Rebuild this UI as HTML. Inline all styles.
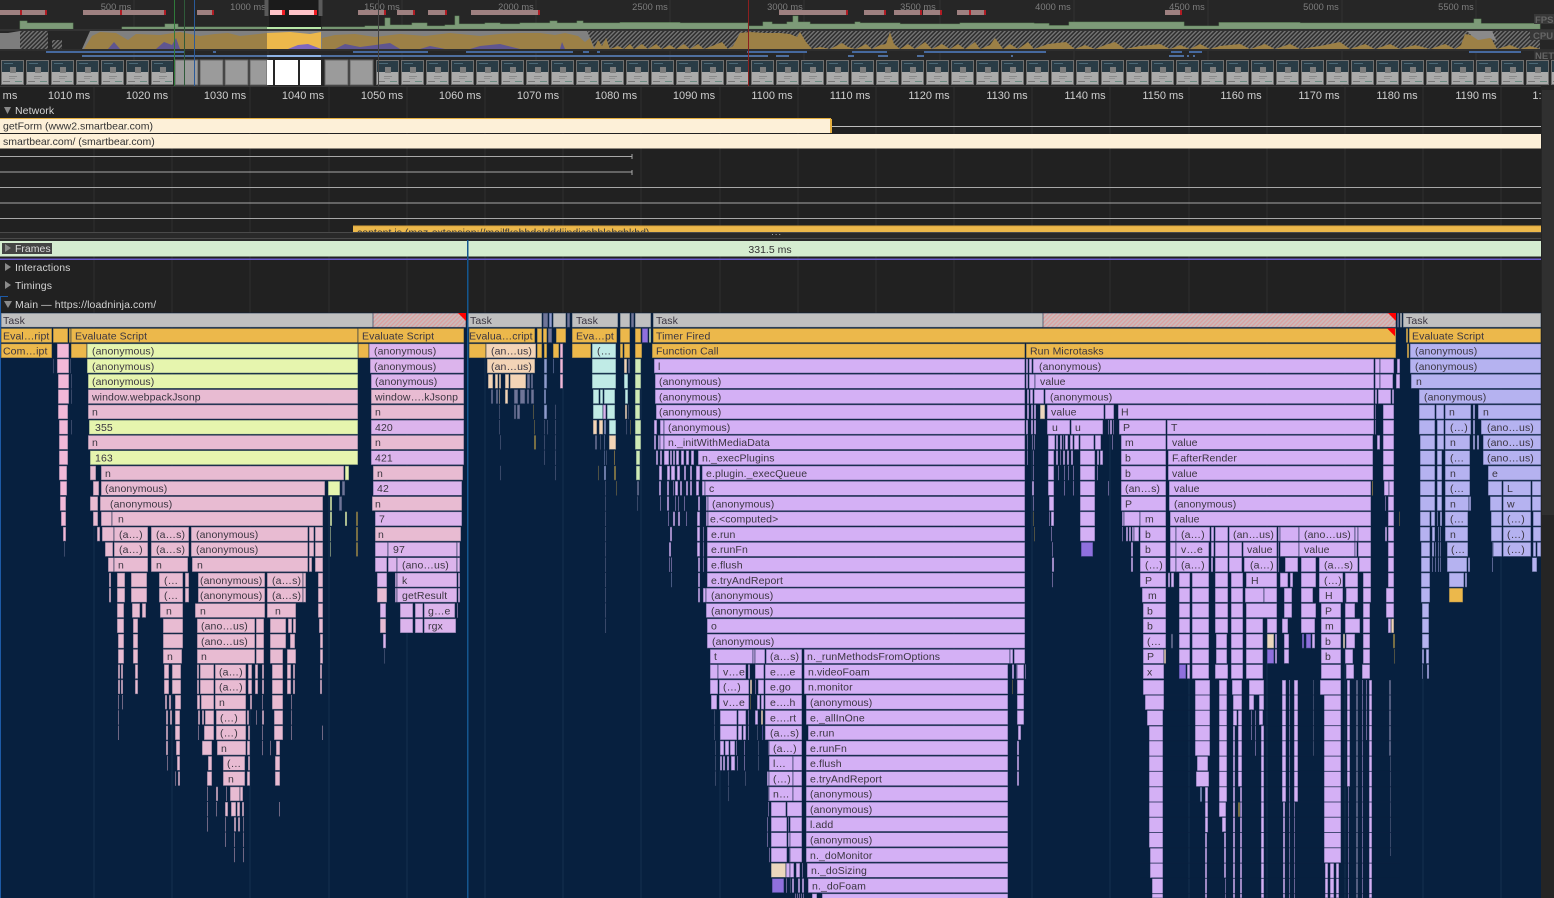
<!DOCTYPE html>
<html><head><meta charset="utf-8"><title>Performance</title>
<style>
html,body{margin:0;padding:0;background:#222;overflow:hidden}
svg{display:block;position:absolute;left:0;top:0}
text{font-family:"Liberation Sans",sans-serif}
.o text{font-size:9.3px;fill:#7e7e7e;text-anchor:middle}
.r text{font-size:11px;fill:#d0d0d0;text-anchor:middle}
.h text{font-size:10.5px;fill:#d4d4d4;letter-spacing:.1px}
.n text{font-size:10.5px;fill:#333}
.f{fill:#d4b0f5}
.f rect{height:14.4px;stroke:#0b2242;stroke-opacity:.55;stroke-width:1}
.f text{font-size:10.5px;fill:#3a3540;letter-spacing:.1px}
.e{fill:#d4b0f5}
.e rect{stroke:#0b2242;stroke-opacity:.55;stroke-width:1}
.a{fill:#ecb84b}.g{fill:#c0c0c0}.l{fill:#e6f5ae}.p{fill:#e8bbd2}.q{fill:#f2b8d8}.v{fill:#dcb4ec}
.k{fill:#f3d4b6}.c{fill:#c0ebe6}.b{fill:#b5b2f0}.s{fill:#cfeab6}.d{fill:#8f70de}.i{fill:#8f9ccd}.t{fill:#6f7598}.y{fill:#a08a45}.m{fill:#ecd7bd}
</style></head><body>
<svg width="1554" height="898" viewBox="0 0 1554 898" xmlns="http://www.w3.org/2000/svg">
<defs>
<pattern id="h" width="3" height="3" patternUnits="userSpaceOnUse" patternTransform="rotate(45)"><rect width="3" height="3" fill="#2e2e2e"/><rect width="1.4" height="3" fill="#757575"/></pattern>
<pattern id="h2" width="3" height="3" patternUnits="userSpaceOnUse" patternTransform="rotate(45)"><rect width="3" height="3" fill="#cbbcbc"/><rect width="1.3" height="3" fill="#dc9f9f"/></pattern>
<pattern id="fr" width="25" height="26" x="1" y="60" patternUnits="userSpaceOnUse">
<rect x="0" y="0" width="23" height="25" fill="#707070"/><rect x="1" y="1" width="21" height="11" fill="#2a3c46"/><rect x="1" y="12" width="21" height="12" fill="#ababab"/><rect x="9" y="7" width="6" height="6" fill="#7d7d7d"/><rect x="3" y="3" width="9" height="1" fill="#4d6a78"/><rect x="8" y="16" width="8" height="1" fill="#8a8a8a"/><rect x="8" y="18" width="6" height="1" fill="#949494"/><rect x="2" y="21" width="7" height="1" fill="#777"/><rect x="14" y="21" width="7" height="1" fill="#6a8a80"/>
</pattern>
</defs>

<!-- base -->
<rect width="1554" height="898" fill="#212121"/>
<rect y="0" width="1554" height="86" fill="#262626"/>
<rect x="267" y="0" width="54" height="30" fill="#1b1b1b"/>
<path d="M134 0V86M268 0V86M402 0V86M536 0V86M670 0V86M804 0V86M940 0V86M1074 0V86M1208 0V86M1342 0V86M1476 0V86" stroke="#333" stroke-width="1"/>
<g class="o"><text x="116" y="10">500 ms</text><text x="248" y="10">1000 ms</text><text x="382" y="10">1500 ms</text><text x="516" y="10">2000 ms</text><text x="650" y="10">2500 ms</text><text x="785" y="10">3000 ms</text><text x="918" y="10">3500 ms</text><text x="1053" y="10">4000 ms</text><text x="1187" y="10">4500 ms</text><text x="1321" y="10">5000 ms</text><text x="1456" y="10">5500 ms</text></g>

<!-- long task bars -->
<path d="M0 10h21v5H0zM22 10h24v5H22zM83 10h38v5H83zM122 10h44v5h-44zM197 10h16v5h-16zM358 10h27v5h-27zM397 10h17v5h-17zM428 10h18v5h-18zM471 10h68v5h-68zM779 10h68v5h-68zM864 10h21v5h-21zM894 10h27v5h-27zM923 10h18v5h-18zM957 10h28v5h-28zM1165 10h16v5h-16z" fill="#9e8080"/>
<path d="M20 10h2v5h-2zM45 10h2v5h-2zM120 10h2v5h-2zM164 10h2v5h-2zM212 10h2v5h-2zM384 10h2v5h-2zM413 10h2v5h-2zM445 10h2v5h-2zM538 10h2v5h-2zM846 10h2v5h-2zM884 10h2v5h-2zM920 10h2v5h-2zM940 10h2v5h-2zM969 10h2v5h-2zM984 10h2v5h-2zM1180 10h2v5h-2z" fill="#b01c24"/>
<path d="M270 10h14v5h-14zM289 10h26v5h-26z" fill="#ffc4c8"/><path d="M282 10h3v5h-3zM314 10h3v5h-3z" fill="#f01c24"/>

<!-- FPS -->
<path d="M20 29V21H27V23H73V29ZM122 29V27H165V24H178V27H267V29ZM322 29V27H365V26H385V18H390V25H412V23H427V26H445V25H455V16H459V24H485V23H500V24H520V23H550V21H557V23H577V21H583V23H620V22.500H680V23H748V26H763V22H772V24H787V22H793V16H798V22H810V24H855V22H860V23H900V24H960V23H1034V23.500H1049V25.500H1069V22H1184V26H1219V22.500H1300V23H1474V19H1481V23.500H1540V29Z" fill="#7d9a78" stroke="#648c5f" stroke-width=".6"/>
<rect x="267" y="27" width="54" height="2" fill="#b8e8a8"/>
<rect y="29" width="1554" height="2" fill="#333"/>

<!-- CPU -->
<rect x="20" y="31" width="28" height="18" fill="url(#h)"/>
<rect x="587" y="31" width="953" height="18" fill="url(#h)"/>
<rect x="52" y="40" width="10" height="9" fill="url(#h)"/>
<path d="M0 49V33H8L20 31V49Z" fill="#7d7d7d"/>
<path d="M82 49L90 31H587L595 49Z" fill="#808080"/>
<path d="M84 49L92 36 100 32 116 33 128 40 136 34 160 35 180 32 200 36 215 34 228 33 240 36 267 33V49ZM322 49V38L335 35 355 34 375 37 400 34 425 36 450 33 480 36 500 34 520 33 540 33 555 35 565 33 578 36 585 42 590 38 594 49Z" fill="#9c8046"/>
<path d="M108 49L114 42 120 49ZM156 49L164 42 172 45 176 38 180 49ZM335 49L345 44 360 47 390 43 400 49ZM420 49L430 46 445 49ZM470 49L480 46 500 44 520 49ZM560 49L562 42 565 49Z" fill="#5f5590"/>
<path d="M594 49L598 40 602 46 606 38 610 49 618 46 624 49 630 44 634 49 642 44 648 49 656 44 662 49 670 45 676 49 684 44 690 49 698 44 704 49 712 46 722 42 728 49 733 46 740 33 750 32 765 33 780 33 790 34 797 37 800 32 806 42 812 49 820 47 830 49 842 43 848 47 856 49 866 44 872 49 880 45 886 44 890 32 894 44 900 49 908 44 915 49 925 42 932 49 942 44 950 49 958 44 965 49 975 42 980 49 990 45 995 38 1003 49 1010 44 1018 49 1028 42 1034 49 1048 44 1066 42 1075 49 1085 45 1095 49 1105 45 1115 42 1125 49 1140 46 1160 44 1170 49 1180 45 1190 49 1200 44 1210 49 1220 46 1240 44 1250 49 1265 44 1275 49 1290 44 1300 49 1320 46 1340 42 1350 49 1365 44 1375 49 1390 44 1400 49 1415 45 1430 49 1445 44 1455 49 1461 45 1465 34 1480 37 1490 36 1497 49 1510 45 1520 49 1530 46 1540 49Z" fill="#9c8046"/>
<path d="M1467 31H1492L1497 42 1490 38 1478 40 1472 36Z" fill="#8a8a8a"/>
<rect x="267" y="31" width="54" height="18" fill="#8a8a8a"/>
<path d="M267 49V33L290 32 310 34 321 32V49Z" fill="#ecb84b"/>
<path d="M288 49L298 45 308 44 316 47 321 49Z" fill="#7f68c0"/>
<rect y="49" width="1554" height="2" fill="#2e2e2e"/>

<!-- NET -->
<path d="M46 51h139v2H46zM213 51h3v2h-3zM353 51h75v2h-75zM466 51h107v2H466zM583 51h6v2h-6zM597 51h3v2h-3zM747 51h60v2h-60zM852 51h35v2h-35zM924 51h122v2H924zM1171 51h11v2h-11zM1189 51h13v2h-13zM1469 51h52v2h-52z" fill="#46699e"/>
<path d="M82 55h185v2H82zM321 55h447v2H321zM776 55h13v2h-13zM848 55h6v2h-6zM878 55h10v2h-10zM917 55h7v2h-7zM1011 55h2v2h-2zM1169 55h15v2h-15zM1187 55h2v2h-2zM1193 55h2v2h-2z" fill="#4f6f9e"/>
<rect x="267" y="55" width="54" height="2" fill="#8fb4e6"/>

<!-- filmstrip -->
<rect x="1" y="60" width="172" height="25" fill="url(#fr)"/>
<rect x="376" y="60" width="1178" height="25" fill="url(#fr)"/>
<path d="M175 60h23v25h-23zM200 60h23v25h-23zM225 60h23v25h-23zM250 60h17v25h-17zM325 60h23v25h-23zM350 60h23v25h-23z" fill="#9b9b9b" stroke="#666" stroke-width="1"/>
<path d="M267 60h6v25h-6zM275 60h23v25h-23zM300 60h21v25h-21z" fill="#fff"/>
<rect x="264.500" y="0" width="4" height="16" fill="#5a5a5a"/><rect x="318.500" y="0" width="4" height="16" fill="#5a5a5a"/>
<path d="M174.500 0V87" stroke="#2f7a3a"/><path d="M184.500 0V87" stroke="#2f5a3a"/><path d="M194.500 0V87" stroke="#2a5a9a"/><path d="M378.500 0V87" stroke="#444"/><path d="M748.500 0V87" stroke="#8c1f1f"/>
<rect y="86" width="1541" height="1" fill="#3a3a3a"/>

<!-- grid -->
<path d="M94 87V313M172 87V313M250 87V313M329 87V313M407 87V313M485 87V313M563 87V313M641 87V313M720 87V313M798 87V313M876 87V313M954 87V313M1032 87V313M1110 87V313M1189 87V313M1267 87V313M1345 87V313M1423 87V313M1501 87V313" stroke="#2f2f2f"/>
<g class="r"><text x="10" y="99">ms</text><text x="69" y="99">1010 ms</text><text x="147" y="99">1020 ms</text><text x="225" y="99">1030 ms</text><text x="303" y="99">1040 ms</text><text x="382" y="99">1050 ms</text><text x="460" y="99">1060 ms</text><text x="538" y="99">1070 ms</text><text x="616" y="99">1080 ms</text><text x="694" y="99">1090 ms</text><text x="772" y="99">1100 ms</text><text x="850" y="99">1110 ms</text><text x="929" y="99">1120 ms</text><text x="1007" y="99">1130 ms</text><text x="1085" y="99">1140 ms</text><text x="1163" y="99">1150 ms</text><text x="1241" y="99">1160 ms</text><text x="1319" y="99">1170 ms</text><text x="1397" y="99">1180 ms</text><text x="1476" y="99">1190 ms</text><text x="1537" y="99">1:</text></g>

<!-- Network -->
<path d="M4 107h7l-3.500 7z" fill="#8a8a8a"/>
<g class="h"><text x="15" y="114">Network</text></g>
<rect y="118" width="831" height="15" fill="#fdf0d8"/><rect y="118" width="831" height="1" fill="#e6b040"/><rect x="830" y="119" width="2" height="14" fill="#e6b040"/>
<rect x="832" y="126" width="709" height="1" fill="#bdbdbd"/>
<rect y="134" width="1541" height="14.500" fill="#fdf0d8"/>
<g class="n"><text x="3" y="129.500">getForm (www2.smartbear.com)</text><text x="3" y="145">smartbear.com/ (smartbear.com)</text></g>
<path d="M0 156.500H632M0 172H632M0 187.500H1541M0 203H1541M0 218.500H1541" stroke="#a8a8a8"/>
<path d="M632 154V159M632 170V175" stroke="#a8a8a8"/>
<rect x="353" y="226" width="1188" height="6" fill="#ecb84b"/><rect x="353" y="225.500" width="1188" height="1" fill="#d8a23c"/>
<g class="n"><text x="357" y="236">content.js (moz-extension://mailfkahhdeldddiindicobhlabgbkhd)</text></g>

<!-- divider -->
<rect y="232" width="1554" height="9" fill="#292929"/>
<rect y="232" width="1541" height="1" fill="#4a4a4a"/><rect y="238" width="1541" height="1" fill="#4a4a4a"/>
<text x="771" y="237" style="font-size:9px;fill:#bbb;letter-spacing:.6px">···</text>

<!-- Frames -->
<rect y="241" width="1541" height="15.500" fill="#d5ecd0"/>
<rect x="2" y="243" width="50" height="11" fill="#444"/>
<path d="M5 244v8l6-4z" fill="#8a8a8a"/>
<text x="15" y="252" style="font-size:10.5px;fill:#ddd">Frames</text>
<text x="770" y="253" style="font-size:10.5px;fill:#333;text-anchor:middle">331.5 ms</text>
<rect y="258.500" width="1541" height="1.500" fill="#6a5acd"/>

<path d="M5 263v8l6-4zM5 281v8l6-4z" fill="#8a8a8a"/>
<path d="M4 301h8l-4 7z" fill="#8a8a8a"/>
<g class="h"><text x="15" y="271">Interactions</text><text x="15" y="289">Timings</text><text x="15" y="308">Main — https://loadninja.com/</text></g>

<!-- flame background -->
<rect y="313" width="1541" height="585" fill="#07203f"/>
<path d="M94 313V898M172 313V898M250 313V898M329 313V898M407 313V898M485 313V898M563 313V898M641 313V898M720 313V898M798 313V898M876 313V898M954 313V898M1032 313V898M1110 313V898M1189 313V898M1267 313V898M1345 313V898M1423 313V898M1501 313V898" stroke="#16304f"/>

<g class="f">
<g transform="translate(0,313)"><rect class="g" x="1" width="465"/><rect class="g" x="468" width="74"/><rect class="t" x="543" width="5"/><rect class="i" x="549" width="3"/><rect class="g" x="553" width="13"/><rect class="t" x="567" width="3"/><rect class="g" x="572" width="46"/><rect class="g" x="620" width="10"/><rect class="t" x="631" width="3"/><rect class="g" x="635" width="16"/><rect class="g" x="653" width="743"/><rect class="t" x="1397" width="2"/><rect class="g" x="1400" width="2"/><rect class="g" x="1403" width="138"/>
<rect x="373" width="93" fill="url(#h2)"/><rect x="1043" width="353" fill="url(#h2)"/>
<path d="M458 0h8v8z" fill="#f00"/><path d="M1388 0h8v8z" fill="#f00"/>
<text x="3" y="11">Task</text><text x="470" y="11">Task</text><text x="576" y="11">Task</text><text x="656" y="11">Task</text><text x="1406" y="11">Task</text></g>

<g transform="translate(0,328.300)"><g class="a"><rect x="1" width="51"/><rect x="53" width="15"/><rect x="69" width="2"/><rect x="71" width="287"/><rect x="358" width="106"/><rect x="469" width="66"/><rect x="537" width="5"/><rect x="543" width="4"/><rect x="556" width="10"/><rect x="572" width="45"/><rect x="620" width="10"/><rect x="635" width="6"/><rect x="653" width="743"/><rect x="1406" width="2"/><rect x="1409" width="132"/></g><rect class="t" x="548" width="4"/><rect class="d" x="642" width="6"/><rect class="s" x="649" width="2"/>
<path d="M1387 0h8v8z" fill="#f00"/>
<text x="3" y="11">Eval…ript</text><text x="75" y="11">Evaluate Script</text><text x="362" y="11">Evaluate Script</text><text x="469" y="11">Evalua…cript</text><text x="576" y="11">Eva…pt</text><text x="656" y="11">Timer Fired</text><text x="1412" y="11">Evaluate Script</text></g>

<g transform="translate(0,343.600)"><g class="a"><rect x="1" width="51"/><rect x="71" width="16"/><rect x="358" width="11"/><rect x="469" width="17"/><rect x="537" width="5"/><rect x="544" width="3"/><rect x="553" width="6"/><rect x="572" width="19"/><rect x="620" width="3"/><rect x="624" width="6"/><rect x="635" width="7"/><rect x="652" width="373"/><rect x="1026" width="370"/><rect x="1407" width="2"/></g><rect class="q" x="57" width="12"/><rect class="l" x="87" width="271"/><rect class="v" x="369" width="95"/><rect class="k" x="486" width="50"/><rect class="q" x="560" width="3"/><rect class="c" x="592" width="24"/><rect class="b" x="1410" width="131"/>
<text x="3" y="11">Com…ipt</text><text x="92" y="11">(anonymous)</text><text x="374" y="11">(anonymous)</text><text x="491" y="11">(an…us)</text><text x="597" y="11">(…</text><text x="656" y="11">Function Call</text><text x="1030" y="11">Run Microtasks</text><text x="1415" y="11">(anonymous)</text></g>

<g transform="translate(0,358.800)"><rect class="t" x="53" width="1"/><rect class="q" x="57" width="12"/><rect class="t" x="70" width="1"/><rect class="l" x="87" width="271"/><rect class="v" x="370" width="94"/><rect class="k" x="487" width="48"/><rect class="i" x="544" width="3"/><rect class="q" x="560" width="3"/><rect class="i" x="553" width="1"/><rect class="c" x="592" width="24"/><rect class="k" x="624" width="3"/><rect class="t" x="628" width="2"/><rect class="s" x="635" width="6"/><rect x="654" width="371"/><rect x="1026" width="2"/><rect x="1029" width="3"/><rect x="1033" width="341"/><rect x="1375" width="5"/><rect x="1380" width="14"/><rect x="1397" width="3"/><rect class="b" x="1410" width="131"/>
<text x="658" y="11">l</text><text x="92" y="11">(anonymous)</text><text x="374" y="11">(anonymous)</text><text x="491" y="11">(an…us)</text><text x="1039" y="11">(anonymous)</text><text x="1415" y="11">(anonymous)</text></g>

<g transform="translate(0,374.100)"><rect class="q" x="58" width="11"/><rect class="t" x="71" width="1"/><rect class="l" x="88" width="270"/><rect class="v" x="371" width="93"/><g class="k"><rect x="488" width="5"/><rect x="495" width="3"/><rect x="499" width="2"/><rect x="505" width="4"/><rect x="510" width="16"/></g><rect class="t" x="527" width="3"/><rect class="t" x="531" width="2"/><rect class="i" x="544" width="3"/><rect class="q" x="560" width="3"/><rect class="c" x="592" width="24"/><rect class="c" x="624" width="4"/><rect class="s" x="635" width="6"/><rect x="655" width="370"/><rect x="1026" width="2"/><rect x="1029" width="6"/><rect x="1035" width="339"/><rect x="1375" width="5"/><rect x="1380" width="13"/><rect x="1396" width="4"/><rect class="b" x="1411" width="130"/>
<text x="659" y="11">(anonymous)</text><text x="92" y="11">(anonymous)</text><text x="375" y="11">(anonymous)</text><text x="1040" y="11">value</text><text x="1416" y="11">n</text></g>

<g transform="translate(0,389.400)"><rect class="q" x="58" width="11"/><rect class="t" x="71" width="1"/><g class="p"><rect x="88" width="270"/><rect x="371" width="93"/></g><rect class="t" x="491" width="2"/><rect class="t" x="496" width="2"/><rect class="k" x="499" width="1"/><rect class="k" x="505" width="3"/><rect class="t" x="514" width="4"/><rect class="t" x="520" width="5"/><rect class="t" x="527" width="2"/><rect class="t" x="531" width="3"/><rect class="i" x="544" width="2"/><rect class="c" x="593" width="6"/><rect class="c" x="600" width="3"/><rect class="c" x="604" width="11"/><rect class="c" x="625" width="3"/><rect class="s" x="635" width="5"/><rect x="655" width="370"/><rect x="1027" width="2"/><rect x="1030" width="3"/><rect x="1034" width="10"/><rect x="1045" width="329"/><rect x="1375" width="2"/><rect x="1378" width="13"/><rect x="1392" width="2"/><rect class="b" x="1419" width="122"/>
<text x="659" y="11">(anonymous)</text><text x="92" y="11">window.webpackJsonp</text><text x="375" y="11">window….kJsonp</text><text x="1050" y="11">(anonymous)</text><text x="1424" y="11">(anonymous)</text></g>

<g transform="translate(0,404.700)"><rect class="q" x="58" width="10"/><g class="p"><rect x="88" width="270"/><rect x="371" width="93"/></g><rect class="t" x="499" width="1"/><rect class="t" x="514" width="2"/><rect class="t" x="517" width="3"/><rect class="y" x="533" width="1"/><rect class="i" x="544" width="3"/><rect class="t" x="555" width="1"/><rect class="c" x="593" width="10"/><rect class="v" x="603" width="3"/><rect class="c" x="607" width="8"/><rect class="k" x="625" width="2"/><rect class="t" x="628" width="1"/><rect class="s" x="635" width="5"/><rect x="656" width="369"/><rect x="1027" width="2"/><rect x="1031" width="2"/><rect x="1034" width="2"/><rect class="m" x="1040" width="5"/><rect x="1047" width="57"/><rect x="1105" width="9"/><rect x="1118" width="256"/><rect x="1375" width="1"/><rect x="1383" width="11"/><g class="b"><rect x="1419" width="16"/><rect x="1436" width="8"/><rect x="1445" width="26"/><rect x="1473" width="2"/><rect x="1478" width="63"/></g>
<text x="659" y="11">(anonymous)</text><text x="92" y="11">n</text><text x="375" y="11">n</text><text x="1051" y="11">value</text><text x="1121" y="11">H</text><text x="1449" y="11">n</text><text x="1483" y="11">n</text></g>

<g transform="translate(0,420)"><rect class="q" x="59" width="9"/><rect class="t" x="71" width="1"/><rect class="l" x="89" width="269"/><rect class="v" x="371" width="93"/><rect class="t" x="499" width="1"/><rect class="y" x="534" width="1"/><rect class="t" x="544" width="1"/><rect class="t" x="547" width="1"/><rect class="t" x="555" width="1"/><rect class="k" x="593" width="4"/><rect class="k" x="599" width="4"/><rect class="i" x="604" width="2"/><rect class="c" x="609" width="7"/><rect class="t" x="626" width="1"/><rect class="y" x="630" width="1"/><rect class="s" x="635" width="6"/><rect x="654" width="3"/><rect x="660" width="4"/><rect x="664" width="361"/><rect x="1026" width="2"/><rect x="1031" width="2"/><rect x="1034" width="2"/><rect x="1047" width="23"/><rect x="1071" width="32"/><rect x="1108" width="1"/><rect x="1110" width="2"/><rect x="1113" width="1"/><rect x="1119" width="47"/><rect x="1167" width="207"/><rect x="1375" width="1"/><rect x="1383" width="11"/><g class="b"><rect x="1419" width="16"/><rect x="1437" width="7"/><rect x="1445" width="26"/><rect x="1473" width="2"/><rect x="1481" width="60"/></g>
<text x="668" y="11">(anonymous)</text><text x="95" y="11">355</text><text x="375" y="11">420</text><text x="1052" y="11">u</text><text x="1075" y="11">u</text><text x="1123" y="11">P</text><text x="1171" y="11">T</text><text x="1450" y="11">(…)</text><text x="1487" y="11">(ano…us)</text></g>

<g transform="translate(0,435.200)"><rect class="q" x="59" width="9"/><g class="p"><rect x="88" width="270"/><rect x="371" width="93"/></g><rect class="t" x="500" width="1"/><rect class="y" x="534" width="2"/><rect class="t" x="544" width="1"/><rect class="t" x="555" width="1"/><rect class="t" x="595" width="2"/><rect class="t" x="600" width="1"/><rect class="i" x="604" width="1"/><rect class="k" x="609" width="7"/><rect class="s" x="635" width="6"/><rect x="654" width="2"/><rect x="658" width="2"/><rect x="660" width="4"/><rect x="664" width="361"/><rect x="1027" width="1"/><rect x="1032" width="1"/><rect x="1034" width="1"/><rect x="1048" width="7"/><rect x="1056" width="2"/><rect x="1060" width="2"/><rect x="1063" width="1"/><rect x="1065" width="3"/><rect x="1070" width="3"/><rect x="1074" width="5"/><rect x="1080" width="14"/><rect x="1095" width="6"/><rect x="1112" width="1"/><rect x="1121" width="45"/><rect x="1167" width="206"/><rect x="1377" width="3"/><rect x="1383" width="11"/><g class="b"><rect x="1420" width="15"/><rect x="1437" width="7"/><rect x="1445" width="25"/><rect x="1473" width="2"/><rect x="1477" width="2"/><rect x="1483" width="58"/></g>
<text x="668" y="11">n._initWithMediaData</text><text x="92" y="11">n</text><text x="375" y="11">n</text><text x="1125" y="11">m</text><text x="1172" y="11">value</text><text x="1450" y="11">n</text><text x="1487" y="11">(ano…us)</text></g>

<g transform="translate(0,450.500)"><rect class="q" x="59" width="9"/><rect class="l" x="90" width="268"/><rect class="v" x="371" width="93"/><rect class="t" x="544" width="1"/><rect class="t" x="555" width="1"/><rect class="i" x="604" width="1"/><rect class="t" x="606" width="1"/><rect class="a" x="614" width="1"/><rect class="s" x="636" width="4"/><rect x="656" width="2"/><rect x="660" width="2"/><rect x="664" width="5"/><rect x="670" width="2"/><rect x="673" width="2"/><rect x="676" width="3"/><rect x="681" width="3"/><rect x="686" width="3"/><rect x="691" width="3"/><rect x="698" width="327"/><rect x="1027" width="1"/><rect x="1033" width="1"/><rect x="1048" width="6"/><rect x="1056" width="2"/><rect x="1060" width="1"/><rect x="1063" width="2"/><rect x="1067" width="2"/><rect x="1071" width="2"/><rect x="1080" width="15"/><rect x="1097" width="2"/><rect x="1100" width="3"/><rect x="1121" width="45"/><rect x="1168" width="205"/><rect x="1383" width="11"/><g class="b"><rect x="1420" width="15"/><rect x="1437" width="5"/><rect x="1445" width="25"/><rect x="1483" width="58"/></g>
<text x="702" y="11">n._execPlugins</text><text x="95" y="11">163</text><text x="375" y="11">421</text><text x="1125" y="11">b</text><text x="1172" y="11">F.afterRender</text><text x="1450" y="11">(…</text><text x="1487" y="11">(ano…us)</text></g>

<g transform="translate(0,465.800)"><rect class="q" x="59" width="8"/><g class="p"><rect x="90" width="6"/><rect x="101" width="243"/><rect x="373" width="90"/></g><rect class="l" x="345" width="4"/><rect class="t" x="500" width="1"/><rect class="t" x="555" width="1"/><rect class="y" x="598" width="1"/><rect class="i" x="604" width="2"/><rect class="y" x="614" width="2"/><rect class="s" x="636" width="4"/><rect x="659" width="3"/><rect x="667" width="3"/><rect x="671" width="4"/><rect x="677" width="3"/><rect x="684" width="2"/><rect x="690" width="2"/><rect x="696" width="4"/><rect x="702" width="323"/><rect x="1033" width="1"/><rect x="1048" width="6"/><rect x="1058" width="1"/><rect x="1064" width="1"/><rect x="1068" width="1"/><rect x="1073" width="1"/><rect x="1080" width="15"/><rect x="1097" width="1"/><rect x="1121" width="45"/><rect x="1168" width="205"/><rect x="1383" width="11"/><g class="b"><rect x="1420" width="15"/><rect x="1437" width="5"/><rect x="1445" width="25"/><rect x="1488" width="53"/></g>
<text x="706" y="11">e.plugin._execQueue</text><text x="105" y="11">n</text><text x="377" y="11">n</text><text x="1125" y="11">b</text><text x="1172" y="11">value</text><text x="1450" y="11">n</text><text x="1492" y="11">e</text></g>

<g transform="translate(0,481.100)"><rect class="q" x="60" width="7"/><g class="p"><rect x="93" width="6"/><rect x="101" width="224"/></g><rect class="l" x="328" width="12"/><rect class="t" x="342" width="3"/><rect class="v" x="373" width="89"/><rect class="t" x="605" width="1"/><rect class="y" x="616" width="1"/><rect class="t" x="637" width="2"/><rect x="659" width="2"/><rect x="667" width="2"/><rect x="673" width="1"/><rect x="675" width="3"/><rect x="680" width="2"/><rect x="686" width="2"/><rect x="690" width="2"/><rect x="696" width="3"/><rect x="702" width="3"/><rect x="705" width="320"/><rect x="1032" width="2"/><rect x="1048" width="6"/><rect x="1064" width="1"/><rect x="1073" width="1"/><rect x="1080" width="15"/><rect x="1108" width="1"/><rect x="1121" width="45"/><rect x="1169" width="202"/><rect class="a" x="1372" width="1"/><rect x="1384" width="5"/><rect x="1389" width="5"/><g class="b"><rect x="1420" width="15"/><rect x="1437" width="5"/><rect x="1445" width="25"/><rect x="1488" width="14"/><rect x="1503" width="28"/><rect x="1532" width="9"/></g>
<text x="709" y="11">c</text><text x="105" y="11">(anonymous)</text><text x="377" y="11">42</text><text x="1125" y="11">(an…s)</text><text x="1174" y="11">value</text><text x="1450" y="11">(…</text><text x="1507" y="11">L</text></g>

<g transform="translate(0,496.400)"><rect class="q" x="60" width="6"/><g class="p"><rect x="90" width="8"/><rect x="100" width="223"/><rect x="372" width="90"/></g><rect class="l" x="330" width="2"/><rect class="t" x="339" width="3"/><rect class="t" x="605" width="1"/><rect class="t" x="637" width="1"/><rect x="660" width="1"/><rect x="667" width="2"/><rect x="675" width="1"/><rect x="678" width="1"/><rect x="684" width="1"/><rect x="698" width="2"/><rect x="706" width="2"/><rect x="708" width="317"/><rect x="1033" width="1"/><rect x="1049" width="5"/><rect x="1080" width="15"/><rect x="1121" width="45"/><rect x="1169" width="202"/><rect x="1385" width="1"/><rect x="1388" width="6"/><g class="b"><rect x="1420" width="15"/><rect x="1437" width="5"/><rect x="1445" width="24"/><rect x="1469" width="2"/><rect x="1490" width="12"/><rect x="1503" width="28"/><rect x="1532" width="9"/></g>
<text x="712" y="11">(anonymous)</text><text x="110" y="11">(anonymous)</text><text x="375" y="11">n</text><text x="1125" y="11">P</text><text x="1174" y="11">(anonymous)</text><text x="1450" y="11">n</text><text x="1507" y="11">w</text></g>

<g transform="translate(0,511.600)"><rect class="q" x="61" width="5"/><g class="p"><rect x="93" width="5"/><rect x="101" width="11"/><rect x="112" width="211"/></g><rect class="l" x="330" width="2"/><rect class="l" x="345" width="2"/><rect class="y" x="356" width="2"/><rect class="v" x="375" width="87"/><rect class="t" x="605" width="1"/><rect x="668" width="1"/><rect x="673" width="2"/><rect x="678" width="2"/><rect x="686" width="1"/><rect x="697" width="3"/><rect x="706" width="2"/><rect x="708" width="317"/><rect class="y" x="1033" width="1"/><rect x="1049" width="1"/><rect x="1051" width="3"/><rect x="1080" width="15"/><rect x="1122" width="2"/><rect x="1124" width="16"/><rect x="1140" width="26"/><rect x="1170" width="201"/><rect x="1388" width="6"/><rect class="y" x="1399" width="1"/><g class="b"><rect x="1420" width="10"/><rect x="1431" width="4"/><rect x="1437" width="1"/><rect x="1440" width="2"/><rect x="1445" width="23"/><rect x="1491" width="11"/><rect x="1503" width="28"/><rect x="1533" width="8"/></g>
<text x="710" y="11">e.&lt;computed&gt;</text><text x="118" y="11">n</text><text x="379" y="11">7</text><text x="1145" y="11">m</text><text x="1174" y="11">value</text><text x="1450" y="11">(…</text><text x="1507" y="11">(…)</text></g>

<g transform="translate(0,526.900)"><rect class="q" x="63" width="3"/><g class="p"><rect x="97" width="3"/><rect x="102" width="12"/><rect x="114" width="34"/><rect x="151" width="38"/><rect x="191" width="117"/><rect x="309" width="5"/><rect x="315" width="8"/><rect x="375" width="86"/></g><rect class="l" x="330" width="1"/><rect class="y" x="356" width="2"/><rect class="t" x="605" width="1"/><rect x="670" width="2"/><rect x="697" width="3"/><rect x="703" width="1"/><rect x="707" width="318"/><rect class="y" x="1034" width="1"/><rect x="1051" width="1"/><rect x="1080" width="15"/><rect x="1122" width="1"/><rect x="1126" width="2"/><rect x="1129" width="2"/><rect x="1132" width="2"/><rect x="1134" width="5"/><rect x="1140" width="26"/><rect x="1170" width="6"/><rect x="1176" width="34"/><rect x="1211" width="3"/><rect x="1215" width="13"/><rect x="1229" width="48"/><rect x="1278" width="2"/><rect x="1280" width="19"/><rect x="1299" width="56"/><rect x="1355" width="3"/><rect x="1358" width="13"/><rect x="1385" width="2"/><rect x="1388" width="6"/><g class="b"><rect x="1420" width="10"/><rect x="1432" width="3"/><rect x="1438" width="1"/><rect x="1440" width="1"/><rect x="1445" width="23"/><rect x="1491" width="11"/><rect x="1503" width="28"/><rect x="1533" width="8"/></g>
<text x="711" y="11">e.run</text><text x="119" y="11">(a…)</text><text x="156" y="11">(a…s)</text><text x="196" y="11">(anonymous)</text><text x="378" y="11">n</text><text x="1145" y="11">b</text><text x="1181" y="11">(a…)</text><text x="1233" y="11">(an…us)</text><text x="1304" y="11">(ano…us)</text><text x="1450" y="11">n</text><text x="1507" y="11">(…)</text></g>

<g transform="translate(0,542.200)"><g class="p"><rect x="105" width="8"/><rect x="114" width="34"/><rect x="151" width="38"/><rect x="191" width="117"/><rect x="309" width="5"/><rect x="315" width="8"/></g><rect class="t" x="64" width="1"/><rect class="l" x="330" width="1"/><rect class="y" x="356" width="2"/><rect class="v" x="375" width="13"/><rect class="v" x="388" width="69"/><rect class="v" x="457" width="3"/><rect class="t" x="605" width="1"/><rect x="669" width="2"/><rect x="697" width="3"/><rect x="703" width="1"/><rect x="707" width="318"/><rect x="1052" width="1"/><rect class="d" x="1081" width="12"/><rect x="1131" width="2"/><rect x="1140" width="26"/><rect x="1170" width="6"/><rect x="1176" width="33"/><rect x="1211" width="3"/><rect x="1215" width="13"/><rect x="1229" width="13"/><rect x="1243" width="34"/><rect x="1278" width="1"/><rect x="1280" width="19"/><rect x="1299" width="56"/><rect x="1355" width="2"/><rect x="1358" width="13"/><rect x="1388" width="6"/><g class="b"><rect x="1421" width="9"/><rect x="1432" width="2"/><rect x="1435" width="1"/><rect x="1438" width="1"/><rect x="1440" width="1"/><rect x="1447" width="21"/><rect x="1492" width="1"/><rect x="1493" width="9"/><rect x="1503" width="28"/><rect x="1533" width="3"/><rect x="1537" width="4"/></g>
<text x="711" y="11">e.runFn</text><text x="119" y="11">(a…)</text><text x="156" y="11">(a…s)</text><text x="196" y="11">(anonymous)</text><text x="393" y="11">97</text><text x="1145" y="11">b</text><text x="1181" y="11">v…e</text><text x="1247" y="11">value</text><text x="1304" y="11">value</text><text x="1451" y="11">(…</text><text x="1507" y="11">(…)</text></g>

<g transform="translate(0,557.500)"><g class="p"><rect x="108" width="6"/><rect x="114" width="34"/><rect x="151" width="37"/><rect x="192" width="116"/><rect x="309" width="3"/><rect x="315" width="8"/></g><g class="v"><rect x="375" width="12"/><rect x="388" width="9"/><rect x="397" width="60"/><rect x="457" width="3"/></g><rect class="t" x="605" width="1"/><rect x="669" width="1"/><rect x="671" width="1"/><rect x="698" width="2"/><rect x="703" width="1"/><rect x="707" width="318"/><rect x="1052" width="2"/><rect x="1131" width="2"/><rect x="1140" width="26"/><rect x="1170" width="6"/><rect x="1176" width="33"/><rect x="1211" width="2"/><rect x="1215" width="13"/><rect x="1229" width="13"/><rect x="1244" width="33"/><rect x="1278" width="1"/><rect x="1285" width="13"/><rect x="1301" width="15"/><rect x="1319" width="39"/><rect x="1359" width="12"/><rect x="1388" width="6"/><g class="b"><rect x="1421" width="9"/><rect x="1432" width="1"/><rect x="1435" width="1"/><rect x="1438" width="1"/><rect x="1440" width="1"/><rect x="1447" width="20"/><rect x="1468" width="2"/><rect x="1492" width="1"/><rect x="1532" width="5"/></g>
<text x="711" y="11">e.flush</text><text x="118" y="11">n</text><text x="156" y="11">n</text><text x="197" y="11">n</text><text x="402" y="11">(ano…us)</text><text x="1145" y="11">(…)</text><text x="1181" y="11">(a…)</text><text x="1250" y="11">(a…)</text><text x="1324" y="11">(a…s)</text></g>

<g transform="translate(0,572.800)"><g class="p"><rect x="109" width="2"/><rect x="117" width="8"/><rect x="131" width="16"/><rect x="159" width="24"/><rect x="185" width="4"/><rect x="198" width="67"/><rect x="267" width="36"/><rect x="303" width="3"/><rect x="318" width="5"/></g><rect class="v" x="377" width="10"/><rect class="v" x="395" width="2"/><rect class="v" x="397" width="60"/><rect class="v" x="458" width="2"/><rect class="t" x="605" width="1"/><rect class="i" x="671" width="1"/><rect x="698" width="2"/><rect x="707" width="318"/><rect x="1052" width="1"/><rect x="1140" width="26"/><rect x="1168" width="2"/><rect x="1171" width="3"/><rect x="1179" width="11"/><rect x="1192" width="17"/><rect x="1215" width="13"/><rect x="1231" width="12"/><rect x="1246" width="31"/><rect x="1280" width="8"/><rect x="1290" width="3"/><rect x="1301" width="15"/><rect x="1319" width="24"/><rect x="1345" width="13"/><rect x="1363" width="8"/><rect x="1388" width="6"/><g class="b"><rect x="1421" width="9"/><rect x="1449" width="15"/><rect x="1465" width="2"/></g>
<text x="711" y="11">e.tryAndReport</text><text x="164" y="11">(…</text><text x="200" y="11">(anonymous)</text><text x="272" y="11">(a…s)</text><text x="402" y="11">k</text><text x="1145" y="11">P</text><text x="1251" y="11">H</text><text x="1324" y="11">(…)</text></g>

<g transform="translate(0,588)"><g class="p"><rect x="109" width="2"/><rect x="117" width="8"/><rect x="131" width="16"/><rect x="159" width="24"/><rect x="185" width="4"/><rect x="198" width="67"/><rect x="267" width="36"/><rect x="303" width="3"/><rect x="318" width="5"/><rect x="377" width="10"/></g><rect class="v" x="395" width="2"/><rect class="v" x="397" width="60"/><rect class="v" x="458" width="2"/><rect class="t" x="605" width="1"/><rect x="698" width="2"/><rect x="703" width="3"/><rect x="706" width="319"/><rect x="1142" width="24"/><rect x="1179" width="11"/><rect x="1192" width="17"/><rect x="1215" width="13"/><rect x="1231" width="12"/><rect x="1245" width="19"/><rect x="1264" width="13"/><rect x="1284" width="8"/><rect x="1301" width="12"/><rect x="1319" width="24"/><rect x="1346" width="12"/><rect x="1363" width="8"/><rect x="1386" width="8"/><rect class="a" x="1449" width="14"/><rect class="b" x="1421" width="9"/>
<text x="711" y="11">(anonymous)</text><text x="164" y="11">(…</text><text x="200" y="11">(anonymous)</text><text x="272" y="11">(a…s)</text><text x="402" y="11">getResult</text><text x="1148" y="11">m</text><text x="1325" y="11">H</text></g>

<g transform="translate(0,603.300)"><g class="p"><rect x="117" width="7"/><rect x="132" width="8"/><rect x="142" width="4"/><rect x="160" width="23"/><rect x="195" width="70"/><rect x="267" width="29"/><rect x="318" width="5"/></g><g class="v"><rect x="380" width="6"/><rect x="400" width="13"/><rect x="415" width="8"/><rect x="424" width="31"/><rect x="457" width="1"/></g><rect class="t" x="605" width="1"/><rect x="706" width="319"/><rect x="1143" width="23"/><rect x="1179" width="11"/><rect x="1192" width="17"/><rect x="1215" width="13"/><rect x="1231" width="12"/><rect x="1246" width="31"/><rect x="1284" width="8"/><rect x="1301" width="15"/><rect x="1321" width="20"/><rect x="1345" width="10"/><rect x="1363" width="7"/><rect x="1386" width="8"/><rect class="b" x="1422" width="7"/>
<text x="711" y="11">(anonymous)</text><text x="166" y="11">n</text><text x="200" y="11">n</text><text x="275" y="11">n</text><text x="428" y="11">g…e</text><text x="1147" y="11">b</text><text x="1325" y="11">P</text></g>

<g transform="translate(0,618.600)"><g class="p"><rect x="117" width="7"/><rect x="133" width="5"/><rect x="163" width="20"/><rect x="197" width="58"/><rect x="256" width="8"/><rect x="270" width="16"/><rect x="288" width="4"/><rect x="293" width="3"/><rect x="319" width="4"/><rect x="380" width="6"/></g><g class="v"><rect x="400" width="13"/><rect x="415" width="8"/><rect x="424" width="32"/></g><rect class="t" x="605" width="1"/><rect x="707" width="318"/><rect x="1143" width="23"/><rect x="1179" width="11"/><rect x="1192" width="17"/><rect x="1215" width="13"/><rect x="1231" width="12"/><rect x="1246" width="17"/><rect x="1267" width="10"/><rect x="1282" width="6"/><rect x="1301" width="14"/><rect x="1321" width="20"/><rect x="1345" width="15"/><rect x="1363" width="7"/><rect class="k" x="1391" width="3"/><rect x="1388" width="3"/><rect class="b" x="1422" width="7"/>
<text x="711" y="11">o</text><text x="201" y="11">(ano…us)</text><text x="1147" y="11">b</text><text x="1325" y="11">m</text><text x="428" y="11">rgx</text></g>

<g transform="translate(0,633.900)"><g class="p"><rect x="118" width="6"/><rect x="133" width="5"/><rect x="163" width="20"/><rect x="197" width="58"/><rect x="256" width="8"/><rect x="270" width="16"/><rect x="290" width="5"/><rect x="320" width="3"/></g><rect class="v" x="383" width="3"/><rect x="707" width="318"/><rect x="1143" width="23"/><rect class="t" x="1171" width="2"/><rect x="1179" width="11"/><rect x="1192" width="17"/><rect x="1216" width="11"/><rect x="1231" width="12"/><rect x="1246" width="17"/><rect class="m" x="1267" width="7"/><rect x="1275" width="2"/><rect x="1284" width="5"/><rect class="d" x="1302" width="2"/><rect class="d" x="1306" width="5"/><rect x="1312" width="3"/><rect x="1321" width="20"/><rect class="m" x="1343" width="2"/><rect x="1346" width="9"/><rect x="1363" width="7"/><rect class="y" x="1393" width="2"/><rect class="b" x="1422" width="7"/>
<text x="712" y="11">(anonymous)</text><text x="201" y="11">(ano…us)</text><text x="1147" y="11">(…</text><text x="1325" y="11">b</text></g>

<g transform="translate(0,649.200)"><g class="p"><rect x="118" width="6"/><rect x="133" width="5"/><rect x="163" width="19"/><rect x="197" width="58"/><rect x="256" width="8"/><rect x="270" width="13"/><rect x="287" width="9"/><rect x="320" width="3"/></g><rect class="t" x="384" width="1"/><rect x="710" width="43"/><rect x="753" width="2"/><rect x="755" width="10"/><rect x="766" width="36"/><rect x="804" width="206"/><rect x="1010" width="3"/><rect x="1014" width="11"/><rect x="1143" width="21"/><rect class="k" x="1164" width="2"/><rect x="1179" width="11"/><rect x="1192" width="17"/><rect x="1216" width="11"/><rect x="1231" width="12"/><rect x="1246" width="17"/><rect class="d" x="1267" width="7"/><rect x="1275" width="2"/><rect x="1284" width="5"/><rect x="1321" width="20"/><rect x="1345" width="8"/><rect x="1363" width="7"/><rect class="y" x="1394" width="1"/><g class="b"><rect x="1422" width="2"/><rect x="1426" width="3"/></g>
<text x="714" y="11">t</text><text x="770" y="11">(a…s)</text><text x="807" y="11">n._runMethodsFromOptions</text><text x="167" y="11">n</text><text x="201" y="11">n</text><text x="1147" y="11">P</text><text x="1325" y="11">b</text></g>

<g transform="translate(0,664.400)"><g class="p"><rect x="118" width="2"/><rect x="121" width="2"/><rect x="135" width="3"/><rect x="164" width="5"/><rect x="172" width="9"/><rect x="197" width="2"/><rect x="200" width="14"/><rect x="215" width="31"/><rect x="248" width="4"/><rect x="255" width="3"/><rect x="262" width="2"/><rect x="272" width="11"/><rect x="287" width="4"/><rect x="293" width="2"/><rect x="320" width="2"/></g><rect x="710" width="8"/><rect x="718" width="28"/><rect x="748" width="2"/><rect x="755" width="9"/><rect x="765" width="37"/><rect x="804" width="204"/><rect x="1012" width="2"/><rect x="1016" width="1"/><rect x="1017" width="7"/><rect x="1025" width="1"/><rect x="1143" width="21"/><rect class="d" x="1179" width="7"/><rect x="1187" width="3"/><rect x="1192" width="17"/><rect x="1215" width="13"/><rect x="1231" width="12"/><rect x="1246" width="17"/><rect x="1321" width="20"/><rect x="1346" width="8"/><rect x="1362" width="8"/><g class="b"><rect x="1422" width="1"/><rect x="1427" width="2"/></g>
<text x="723" y="11">v…e</text><text x="770" y="11">e….e</text><text x="808" y="11">n.videoFoam</text><text x="219" y="11">(a…)</text><text x="1147" y="11">x</text></g>

<g transform="translate(0,679.700)"><g class="p"><rect x="118" width="2"/><rect x="121" width="2"/><rect x="135" width="3"/><rect x="164" width="5"/><rect x="172" width="9"/><rect x="197" width="2"/><rect x="200" width="14"/><rect x="215" width="31"/><rect x="248" width="4"/><rect x="255" width="3"/><rect x="262" width="2"/><rect x="272" width="11"/><rect x="287" width="4"/><rect x="293" width="2"/><rect x="320" width="2"/></g><rect x="710" width="8"/><rect x="719" width="30"/><rect class="k" x="750" width="2"/><rect x="755" width="1"/><rect x="758" width="6"/><rect x="765" width="37"/><rect x="804" width="204"/><rect class="y" x="1012" width="1"/><rect x="1017" width="7"/>
<text x="723" y="11">(…)</text><text x="770" y="11">e.go</text><text x="808" y="11">n.monitor</text><text x="219" y="11">(a…)</text></g>

<g transform="translate(0,695)"><g class="p"><rect x="118" width="1"/><rect x="122" width="1"/><rect x="165" width="2"/><rect x="169" width="2"/><rect x="175" width="6"/><rect x="197" width="3"/><rect x="201" width="13"/><rect x="215" width="31"/><rect x="250" width="2"/><rect x="262" width="1"/><rect x="272" width="11"/><rect x="291" width="1"/></g><rect x="711" width="6"/><rect x="719" width="30"/><rect class="y" x="750" width="1"/><rect x="757" width="3"/><rect x="761" width="3"/><rect x="765" width="37"/><rect x="806" width="202"/><rect x="1017" width="7"/>
<text x="723" y="11">v…e</text><text x="770" y="11">e….h</text><text x="810" y="11">(anonymous)</text><text x="219" y="11">n</text></g>

<g transform="translate(0,710.300)"><g class="p"><rect x="118" width="1"/><rect x="166" width="2"/><rect x="170" width="2"/><rect x="175" width="5"/><rect x="198" width="2"/><rect x="202" width="2"/><rect x="205" width="9"/><rect x="216" width="30"/><rect x="247" width="2"/><rect x="256" width="1"/><rect x="262" width="2"/><rect x="274" width="9"/><rect x="291" width="1"/></g><rect class="t" x="714" width="1"/><rect x="720" width="17"/><rect x="738" width="8"/><rect x="748" width="1"/><rect x="755" width="3"/><rect class="k" x="761" width="2"/><rect x="765" width="37"/><rect x="806" width="202"/><rect x="1017" width="7"/>
<text x="770" y="11">e….rt</text><text x="810" y="11">e._allInOne</text><text x="220" y="11">(…)</text></g>

<g transform="translate(0,725.600)"><g class="p"><rect x="118" width="1"/><rect x="166" width="2"/><rect x="175" width="5"/><rect x="198" width="1"/><rect x="204" width="10"/><rect x="216" width="30"/><rect x="248" width="2"/><rect x="262" width="1"/><rect x="274" width="9"/><rect x="291" width="1"/><rect x="322" width="1"/></g><rect class="t" x="714" width="1"/><rect x="720" width="17"/><rect x="738" width="4"/><rect x="743" width="3"/><rect x="748" width="1"/><rect class="t" x="757" width="1"/><rect class="d" x="762" width="1"/><rect x="765" width="37"/><rect x="808" width="200"/><rect x="1018" width="3"/>
<text x="770" y="11">(a…s)</text><text x="810" y="11">e.run</text><text x="220" y="11">(…)</text></g>

<g transform="translate(0,740.800)"><g class="p"><rect x="166" width="2"/><rect x="176" width="4"/><rect x="202" width="10"/><rect x="217" width="29"/><rect x="247" width="3"/><rect x="262" width="1"/><rect x="270" width="1"/><rect x="276" width="4"/></g><rect class="t" x="715" width="1"/><rect x="720" width="4"/><rect x="725" width="4"/><rect x="730" width="5"/><rect x="736" width="1"/><rect x="744" width="1"/><rect class="t" x="758" width="1"/><rect x="768" width="1"/><rect x="769" width="33"/><rect x="806" width="202"/><rect x="1017" width="2"/>
<text x="773" y="11">(a…)</text><text x="810" y="11">e.runFn</text><text x="221" y="11">n</text></g>

<g transform="translate(0,756.100)"><g class="p"><rect x="167" width="1"/><rect x="177" width="3"/><rect x="208" width="4"/><rect x="223" width="22"/><rect x="248" width="2"/><rect x="275" width="5"/></g><rect class="t" x="715" width="1"/><rect x="720" width="2"/><rect x="723" width="2"/><rect x="727" width="2"/><rect x="731" width="4"/><rect x="737" width="1"/><rect x="744" width="1"/><rect class="t" x="758" width="1"/><rect x="769" width="24"/><rect x="793" width="9"/><rect x="806" width="202"/><rect x="1017" width="2"/>
<text x="773" y="11">l…</text><text x="810" y="11">e.flush</text><text x="227" y="11">(…</text></g>

<g transform="translate(0,771.400)"><g class="p"><rect x="175" width="1"/><rect x="178" width="2"/><rect x="207" width="5"/><rect x="223" width="22"/><rect x="247" width="3"/><rect x="275" width="5"/></g><rect class="t" x="715" width="1"/><rect class="t" x="728" width="1"/><rect class="t" x="745" width="1"/><rect x="767" width="2"/><rect x="769" width="24"/><rect x="793" width="9"/><rect x="806" width="202"/><rect x="1017" width="2"/>
<text x="773" y="11">(…)</text><text x="810" y="11">e.tryAndReport</text><text x="228" y="11">n</text></g>

<g transform="translate(0,786.700)"><g class="p"><rect x="226" width="1"/><rect x="230" width="10"/><rect x="240" width="3"/><rect x="207" width="1"/><rect x="216" width="2"/></g><rect class="t" x="728" width="1"/><rect x="768" width="1"/><rect x="769" width="24"/><rect x="793" width="9"/><rect x="806" width="202"/>
<text x="773" y="11">n…</text><text x="810" y="11">(anonymous)</text></g>

<g transform="translate(0,802)"><g class="p"><rect x="207" width="1"/><rect x="216" width="1"/><rect x="225" width="3"/><rect x="231" width="5"/><rect x="237" width="3"/><rect x="242" width="2"/><rect x="279" width="1"/></g><rect x="768" width="1"/><rect x="771" width="15"/><rect x="787" width="15"/><rect x="806" width="202"/>
<text x="810" y="11">(anonymous)</text></g>

<g transform="translate(0,817.200)"><g class="p"><rect x="207" width="1"/><rect x="225" width="1"/><rect x="234" width="2"/><rect x="238" width="2"/><rect x="243" width="1"/></g><rect x="767" width="1"/><rect x="771" width="16"/><rect x="788" width="1"/><rect x="790" width="12"/><rect x="806" width="202"/>
<text x="810" y="11">l.add</text></g>

<g transform="translate(0,832.500)"><g class="p"><rect x="225" width="1"/><rect x="234" width="1"/><rect x="243" width="1"/></g><rect x="767" width="1"/><rect x="771" width="16"/><rect x="788" width="2"/><rect x="790" width="12"/><rect x="806" width="202"/>
<text x="810" y="11">(anonymous)</text></g>

<g transform="translate(0,847.800)"><g class="p"><rect x="234" width="1"/><rect x="243" width="1"/></g><rect x="769" width="1"/><rect x="771" width="16"/><rect x="789" width="1"/><rect x="790" width="12"/><rect x="806" width="202"/>
<text x="810" y="11">n._doMonitor</text></g>

<g transform="translate(0,863.100)"><rect class="m" x="771" width="15"/><rect x="786" width="4"/><rect x="790" width="4"/><rect x="796" width="4"/><rect x="802" width="1"/><rect x="807" width="201"/>
<text x="811" y="11">n._doSizing</text></g>

<g transform="translate(0,878.400)"><rect class="d" x="772" width="12"/><rect x="786" width="1"/><rect class="t" x="790" width="1"/><rect x="792" width="2"/><rect x="798" width="2"/><rect x="802" width="2"/><rect x="808" width="200"/>
<text x="812" y="11">n._doFoam</text></g>

<g transform="translate(0,893.600)"><rect x="795" width="1"/><rect x="797" width="1"/><rect x="799" width="1"/><rect x="801" width="1"/><rect x="803" width="1"/><rect x="812" width="5"/><rect x="822" width="186"/></g>
</g>

<!-- deep columns, right block -->
<g class="e">
<rect x="1143" y="680" width="21" height="15"/><rect x="1145" y="695" width="19" height="15"/><rect x="1147" y="710" width="16" height="16"/><rect x="1149" y="726" width="14" height="122"/><rect x="1150" y="848" width="13" height="30"/><rect x="1152" y="878" width="11" height="20"/>
<rect x="1195" y="680" width="15" height="76"/><rect x="1197" y="756" width="11" height="15"/><rect x="1196" y="771" width="13" height="16"/><rect class="i" x="1200" y="787" width="2" height="15"/><rect x="1205" y="787" width="3" height="46"/><rect x="1205" y="833" width="2" height="65"/>
<rect x="1219" y="680" width="8" height="122"/><rect x="1219" y="802" width="7" height="15"/><rect x="1222" y="817" width="4" height="15"/><rect x="1224" y="832" width="2" height="46"/><rect x="1225" y="878" width="1" height="20"/>
<rect x="1232" y="680" width="10" height="15"/><rect x="1233" y="695" width="9" height="15"/><rect x="1233" y="710" width="4" height="16"/><rect x="1238" y="710" width="4" height="77"/><rect x="1233" y="726" width="2" height="172"/><rect x="1240" y="787" width="2" height="111"/><rect class="y" x="1238" y="802" width="2" height="15"/>
<rect x="1249" y="680" width="15" height="15"/><rect x="1249" y="695" width="5" height="15"/><rect x="1259" y="695" width="5" height="15"/><rect x="1251" y="710" width="1" height="30"/><rect x="1255" y="710" width="1" height="46"/><rect x="1259" y="710" width="4" height="15"/><rect x="1261" y="725" width="3" height="173"/>
<rect x="1282" y="680" width="4" height="122"/><rect x="1283" y="802" width="2" height="96"/>
<rect x="1289" y="680" width="1" height="218"/>
<rect x="1294" y="680" width="4" height="122"/><rect x="1294" y="802" width="1" height="96"/>
<rect class="t" x="1313" y="680" width="1" height="76"/>
<rect x="1320" y="680" width="21" height="15"/><rect x="1324" y="695" width="17" height="168"/><rect x="1325" y="863" width="3" height="35"/><rect x="1330" y="863" width="4" height="35"/><rect x="1336" y="863" width="3" height="35"/>
<rect x="1347" y="680" width="3" height="107"/><rect x="1348" y="787" width="1" height="111"/>
<rect class="t" x="1356" y="680" width="2" height="218"/>
<rect x="1362" y="680" width="1" height="218"/><rect x="1366" y="680" width="1" height="60"/>
<rect x="1369" y="680" width="3" height="218"/>
<rect class="t" x="1389" y="680" width="2" height="76"/><rect class="t" x="1390" y="756" width="1" height="100"/>
</g>
<path d="M1140 695H1400M1140 710.300H1400M1140 725.600H1400M1140 740.800H1400M1140 756.100H1400M1140 771.400H1400M1140 786.700H1400M1140 802H1400M1140 817.200H1400M1140 832.500H1400M1140 847.800H1400M1140 863.100H1400M1140 878.400H1400M1140 893.600H1400" stroke="#0a2040" stroke-opacity=".7" fill="none"/>

<!-- overlays -->
<path d="M0.500 297V898" stroke="#1d5aa6"/><path d="M0 296.500H8" stroke="#1d5aa6"/>
<rect x="467" y="240" width="1.500" height="658" fill="#14568f"/>

<!-- right strip -->
<rect x="1541" y="86" width="13" height="812" fill="#252525"/>
<rect x="1542" y="90" width="12" height="425" fill="#303030"/>

<!-- overview labels -->
<g style="font-size:9.500px;font-weight:bold;fill:#666"><rect x="1534" y="14" width="20" height="10" fill="#383838"/><text x="1535" y="23">FPS</text><rect x="1530" y="30" width="24" height="10" fill="#383838"/><text x="1533" y="39">CPU</text><rect x="1534" y="50" width="20" height="10" fill="#303030"/><text x="1535" y="59">NET</text></g>
</svg>
</body></html>
